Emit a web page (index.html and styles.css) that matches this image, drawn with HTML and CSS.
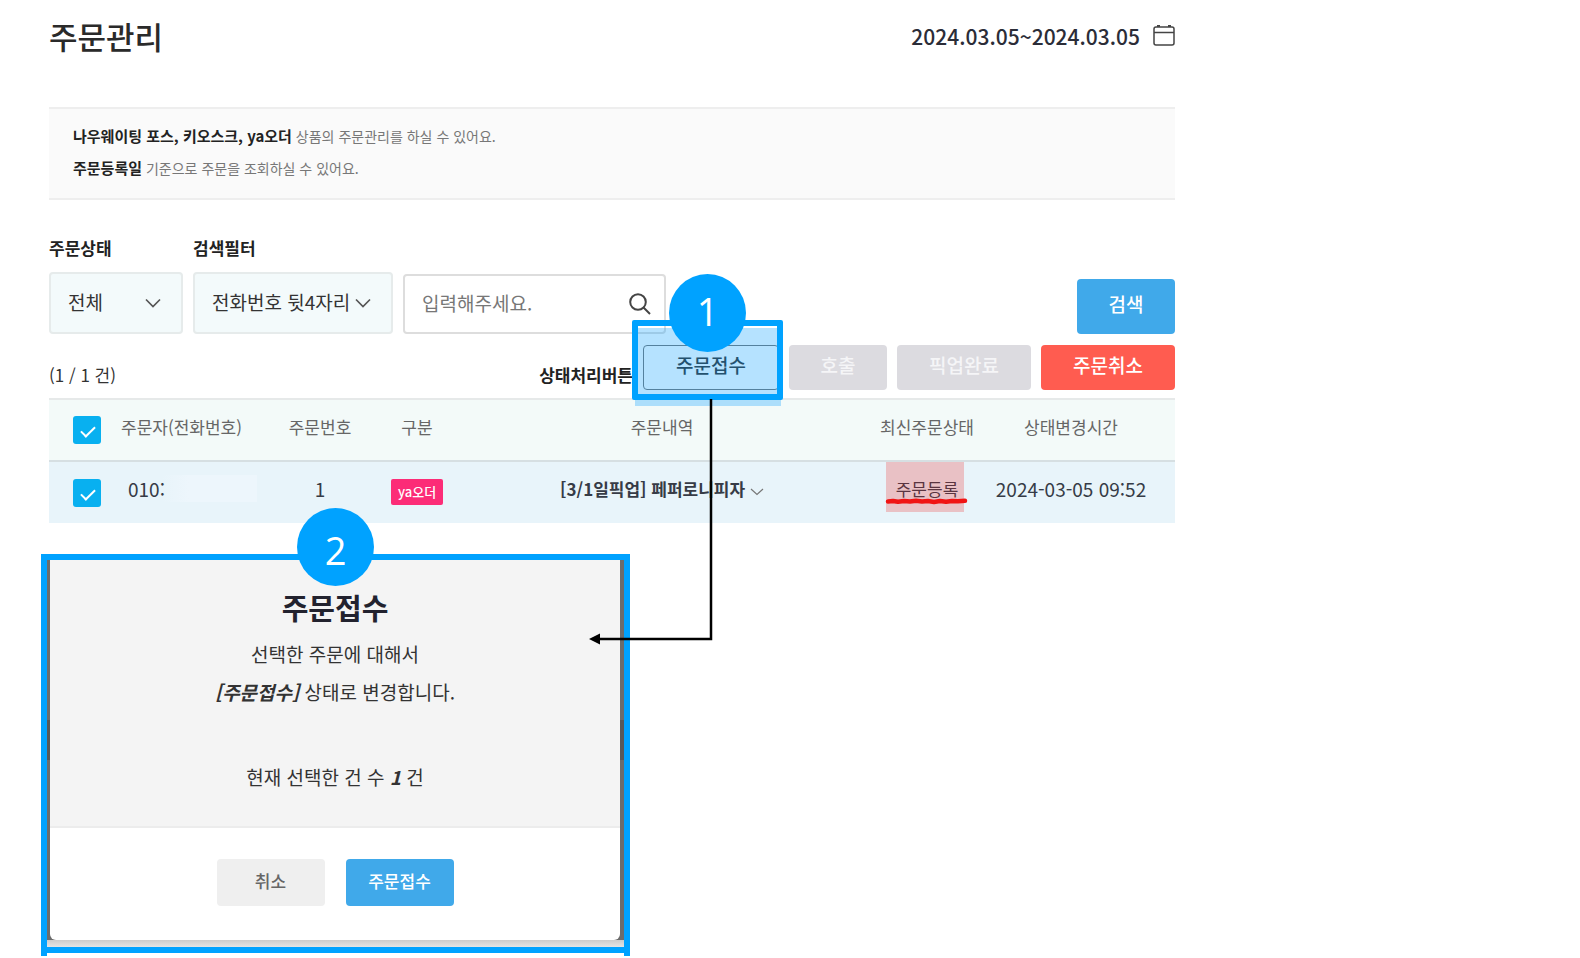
FILE: index.html
```html
<!DOCTYPE html>
<html lang="ko">
<head>
    <meta charset="UTF-8">
    <meta name="viewport" content="width=device-width, initial-scale=1.0">
    <title>주문관리</title>
    <link rel="stylesheet" href="styles.css">
</head>
<body>

    <main class="page">
        <header class="page-header">
            <h1>주문관리</h1>
            <button type="button" class="date-range">
                2024.03.05~2024.03.05
                <svg width="22" height="22" viewBox="0 0 22 22" fill="none" stroke="#444" stroke-width="1.5" aria-hidden="true">
                    <rect x="1" y="2" width="20" height="18" rx="2"/>
                    <path d="M1 7.500h20M5.500 0v2M16.500 0v2"/>
                    <path d="M5.500 0v2M16.500 0v2" stroke-width="3"/>
                </svg>
            </button>
        </header>

        <section class="notice">
            <p><strong>나우웨이팅 포스, 키오스크, ya오더</strong> 상품의 주문관리를 하실 수 있어요.</p>
            <p><strong>주문등록일</strong> 기준으로 주문을 조회하실 수 있어요.</p>
        </section>

        <!-- Filters -->
        <form class="filters">
            <div class="field field-status">
                <label for="status">주문상태</label>
                <div class="select-box">
                    <select id="status"><option>전체</option></select>
                    <svg width="16" height="10" viewBox="0 0 16 10" fill="none" stroke="#555" stroke-width="1.7" aria-hidden="true"><path d="M1 1.500l7 7 7-7"/></svg>
                </div>
            </div>
            <div class="field field-filter">
                <label for="filter">검색필터</label>
                <div class="select-box">
                    <select id="filter"><option>전화번호 뒷4자리</option></select>
                    <svg width="16" height="10" viewBox="0 0 16 10" fill="none" stroke="#555" stroke-width="1.7" aria-hidden="true"><path d="M1 1.500l7 7 7-7"/></svg>
                </div>
            </div>
            <div class="search-box">
                <input type="text" placeholder="입력해주세요." aria-label="검색어">
                <svg width="22" height="22" viewBox="0 0 22 22" fill="none" stroke="#444" stroke-width="2" aria-hidden="true">
                    <circle cx="9" cy="9" r="7.800"/>
                    <path d="M14.500 14.500l6.500 6.500"/>
                </svg>
            </div>
            <button type="button" class="btn btn-search">검색</button>
        </form>

        <!-- Status buttons -->
        <div class="actions">
            <span class="count">(1 / 1 건)</span>
            <span class="actions-label">상태처리버튼</span>
            <div class="step">
                <button type="button" class="btn btn-outline">주문접수</button>
                <div class="step-fill"></div>
                <div class="step-frame"></div>
                <svg class="step-arrow" width="126" height="250" viewBox="0 0 126 250" aria-hidden="true">
                    <path d="M122 0v240H10" fill="none" stroke="#000" stroke-width="2.500"/>
                    <path d="M0 240l11-5.500v11z"/>
                </svg>
                <span class="badge badge-one">1</span>
            </div>
            <button type="button" class="btn btn-disabled" disabled>호출</button>
            <button type="button" class="btn btn-wide btn-disabled" disabled>픽업완료</button>
            <button type="button" class="btn btn-wide btn-danger">주문취소</button>
        </div>

        <table class="orders">
            <colgroup>
                <col class="col-check">
                <col class="col-phone">
                <col class="col-number">
                <col class="col-type">
                <col>
                <col class="col-status">
                <col class="col-time">
            </colgroup>
            <thead>
                <tr>
                    <th class="check-cell"><input type="checkbox" aria-label="전체 선택" checked></th>
                    <th class="phone-cell">주문자(전화번호)</th>
                    <th>주문번호</th>
                    <th>구분</th>
                    <th>주문내역</th>
                    <th>최신주문상태</th>
                    <th class="time-cell">상태변경시간</th>
                </tr>
            </thead>
            <tbody>
                <tr>
                    <td class="check-cell"><input type="checkbox" aria-label="주문 1 선택" checked></td>
                    <td class="phone-cell"><span class="phone">010:</span></td>
                    <td>1</td>
                    <td class="type-cell"><span class="tag">ya오더</span></td>
                    <td class="item-cell">
                        [3/1일픽업] 페퍼로니피자
                        <svg width="14" height="8" viewBox="0 0 14 8" fill="none" stroke="#777" stroke-width="1.2" aria-hidden="true"><path d="M1 1l6 5.500L13 1"/></svg>
                    </td>
                    <td class="status-cell">
                        <span class="status">주문등록
                            <svg width="84" height="8" viewBox="0 0 84 8" fill="none" stroke="#f01414" stroke-width="4.500" stroke-linecap="round" stroke-linejoin="round" aria-hidden="true"><path d="M3 4.500l5-.5 5 .8 6-.8 6 .6 6-.9 6 .8 6-.4 6 .9 6-1 6 .8 6-.9 6 .3 7-.4"/></svg>
                        </span>
                    </td>
                    <td class="time-cell">2024-03-05 09:52</td>
                </tr>
            </tbody>
        </table>

        <!-- Confirm dialog -->
        <div class="dialog-frame">
            <section class="dialog">
                <div class="dialog-body">
                    <h2>주문접수</h2>
                    <p>선택한 주문에 대해서</p>
                    <p><em>[주문접수]</em> 상태로 변경합니다.</p>
                    <p class="selected">현재 선택한 건 수 <em>1</em> 건</p>
                </div>
                <div class="dialog-footer">
                    <button type="button" class="btn btn-cancel">취소</button>
                    <button type="button" class="btn btn-confirm">주문접수</button>
                </div>
            </section>
            <span class="badge badge-two">2</span>
        </div>
    </main>

</body>
</html>
```

FILE: styles.css
```css
/* General styling */
* {
    box-sizing: border-box;
}

body {
    font-family: "Noto Sans CJK KR", sans-serif;
    font-size: 17px;
    background-color: #fff;
    color: #333;
    margin: 0;
}

h1, h2, p {
    margin: 0;
}

button, input, select {
    font-family: inherit;
}

.page {
    max-width: 1224px;
    padding: 12px 49px 3px;
}

/* Header */
.page-header {
    display: flex;
    justify-content: space-between;
    align-items: center;
    height: 48px;
}

h1 {
    font-size: 31px;
    font-weight: 500;
    line-height: 46px;
    color: #2a2a2a;
}

.date-range {
    display: flex;
    align-items: center;
    gap: 13px;
    padding: 0;
    border: none;
    background: none;
    font-size: 21px;
    font-weight: 500;
    color: #2b2d38;
}

/* Notice */
.notice {
    margin-top: 47px;
    padding: 11px 24px 14px;
    border-top: 2px solid #eee;
    border-bottom: 2px solid #eee;
    background-color: #fafafa;
    font-size: 14px;
    line-height: 32px;
    color: #777;
}

.notice strong {
    font-size: 15px;
    color: #222;
}

/* Filters */
.filters {
    display: flex;
    align-items: flex-end;
    gap: 10px;
    margin-top: 36px;
}

.field label {
    display: block;
    margin-bottom: 12px;
    font-weight: 700;
    line-height: 24px;
    color: #222;
}

.field-status {
    width: 134px;
}

.field-filter {
    width: 200px;
}

.select-box, .search-box {
    position: relative;
}

.select-box svg, .search-box svg {
    position: absolute;
    top: 50%;
    transform: translateY(-50%);
    pointer-events: none;
}

.select-box svg {
    right: 22px;
}

.search-box svg {
    right: 15px;
}

select {
    display: block;
    appearance: none;
    width: 100%;
    height: 62px;
    padding: 0 17px 4px;
    border: 2px solid #e6ebeb;
    border-radius: 4px;
    background-color: #f3fafb;
    font-size: 19px;
    color: #333;
}

.search-box {
    width: 263px;
}

.search-box input {
    display: block;
    width: 100%;
    height: 60px;
    padding: 0 17px 4px;
    border: 2px solid #ddd;
    border-radius: 4px;
    font-size: 19px;
}

.search-box input::placeholder {
    color: #777;
}

/* Buttons */
.btn {
    width: 98px;
    height: 45px;
    padding: 0 0 6px;
    border: none;
    border-radius: 4px;
    font-size: 19px;
    font-weight: 500;
    color: #fff;
}

.btn-wide {
    width: 134px;
}

.btn-search {
    height: 55px;
    margin-left: auto;
    background-color: #40a9ea;
}

.btn-outline {
    display: block;
    width: 136px;
    border: 1px solid #777;
    background-color: #fff;
    color: #333;
}

.btn-disabled {
    background-color: #dcdbe0;
    color: #f5f5f7;
}

.btn-danger {
    background-color: #ff5c50;
}

.actions {
    display: flex;
    align-items: flex-end;
    gap: 10px;
    margin-top: 11px;
}

.count, .actions-label {
    line-height: 30px;
}

.actions-label {
    margin-left: auto;
    font-weight: 700;
    color: #222;
}

/* Step highlight on the button */
.step {
    position: relative;
}

.step-fill, .step-frame, .step-arrow {
    position: absolute;
    pointer-events: none;
}

.step-fill {
    inset: -17px -2px -16px -8px;
    background-color: rgba(0, 155, 255, 0.29);
}

.step-frame {
    inset: -25px -4px -10px -11px;
    border: 6px solid #00a2ff;
    border-radius: 2px;
}

.step-arrow {
    top: 54px;
    right: 64px;
    z-index: 2;
}

.badge {
    position: absolute;
    display: flex;
    align-items: center;
    justify-content: center;
    width: 77px;
    height: 78px;
    border-radius: 50%;
    background-color: #00a2ff;
    font-family: "Open Sans", sans-serif;
    font-size: 38px;
    font-weight: 400;
    color: #fff;
}

.badge-one {
    top: -71px;
    left: 26px;
    padding-bottom: 4px;
}

.badge-two {
    top: -52px;
    left: 250px;
    padding-top: 6px;
}

/* Orders table */
.orders {
    width: 100%;
    margin-top: 8px;
    border-collapse: collapse;
    table-layout: fixed;
    text-align: center;
}

.col-check { width: 72px; }
.col-phone { width: 136px; }
.col-number { width: 126px; }
.col-type { width: 68px; }
.col-status { width: 108px; }
.col-time { width: 194px; }

.orders th, .orders td {
    height: 62px;
    padding: 0 0 8px;
}

.orders th {
    border-top: 2px solid #e6e9e9;
    border-bottom: 2px solid #d6dfe2;
    background-color: #f3faf9;
    font-weight: 400;
    color: #666;
}

.orders td {
    background-color: #e8f4fa;
    font-size: 19px;
    color: #363b46;
}

.orders .check-cell {
    padding: 0 0 0 24px;
    text-align: left;
}

.orders .phone-cell {
    text-align: left;
}

.orders .type-cell {
    padding-bottom: 4px;
}

.orders .time-cell {
    padding-right: 14px;
}

.orders .item-cell {
    font-size: 17px;
    font-weight: 700;
}

.orders .status-cell {
    font-size: 17px;
}

.phone {
    display: block;
    padding-left: 7px;
    background: linear-gradient(to right, transparent 30%, #edf6fc 50%);
}

input[type="checkbox"] {
    display: block;
    position: relative;
    appearance: none;
    width: 28px;
    height: 28px;
    margin: 0;
    border-radius: 3px;
    background-color: #08b0f0;
}

input[type="checkbox"]::before {
    content: "";
    position: absolute;
    top: 7px;
    left: 11px;
    width: 6px;
    height: 12px;
    border: solid #fff;
    border-width: 0 2px 2px 0;
    transform: rotate(45deg);
}

.tag {
    display: inline-block;
    width: 52px;
    border-radius: 2px;
    background-color: #fc2c77;
    font-size: 13px;
    font-weight: 500;
    line-height: 26px;
    vertical-align: middle;
    color: #fff;
}

.status {
    display: inline-block;
    position: relative;
    z-index: 0;
    color: #5a3540;
}

.status::before {
    content: "";
    position: absolute;
    z-index: -1;
    top: -14px;
    left: -10px;
    right: -6px;
    height: 50px;
    background-color: #e9c1c5;
}

.status svg {
    position: absolute;
    left: -11px;
    bottom: -4px;
}

/* Dialog */
.dialog-frame {
    position: relative;
    width: 589px;
    margin: 31px 0 0 -8px;
    padding: 0 4px 7px 3px;
    border: 6px solid #00a2ff;
    background: linear-gradient(#6c6c6c 160px, #585858 160px, #585858 200px, #6c6c6c 200px, #6c6c6c 380px, #ccc 380px, #e4e4e4 100%);
}

/* Side bars run a little past the bottom bar */
.dialog-frame::after {
    content: "";
    position: absolute;
    inset: -6px -6px -9px;
    border: solid #00a2ff;
    border-width: 0 6px;
    pointer-events: none;
}

.dialog {
    border-radius: 0 0 6px 6px;
    background-color: #fff;
    text-align: center;
    overflow: hidden;
}

.dialog-body {
    padding: 27px 0 30px;
    border-bottom: 2px solid #ececec;
    background-color: #f4f4f4;
    font-size: 19px;
    line-height: 38px;
    color: #333;
}

.dialog h2 {
    margin-bottom: 8px;
    font-size: 29px;
    line-height: 40px;
    color: #22222e;
}

.dialog em {
    font-weight: 700;
}

.dialog .selected {
    margin-top: 47px;
}

.dialog-footer {
    display: flex;
    justify-content: center;
    gap: 21px;
    padding: 31px 0 34px;
}

.dialog-footer .btn {
    width: 108px;
    height: 47px;
    padding-bottom: 4px;
    font-size: 17px;
}

.btn-cancel {
    background-color: #efefef;
    color: #666;
}

.btn-confirm {
    background-color: #40a9ea;
}
```
